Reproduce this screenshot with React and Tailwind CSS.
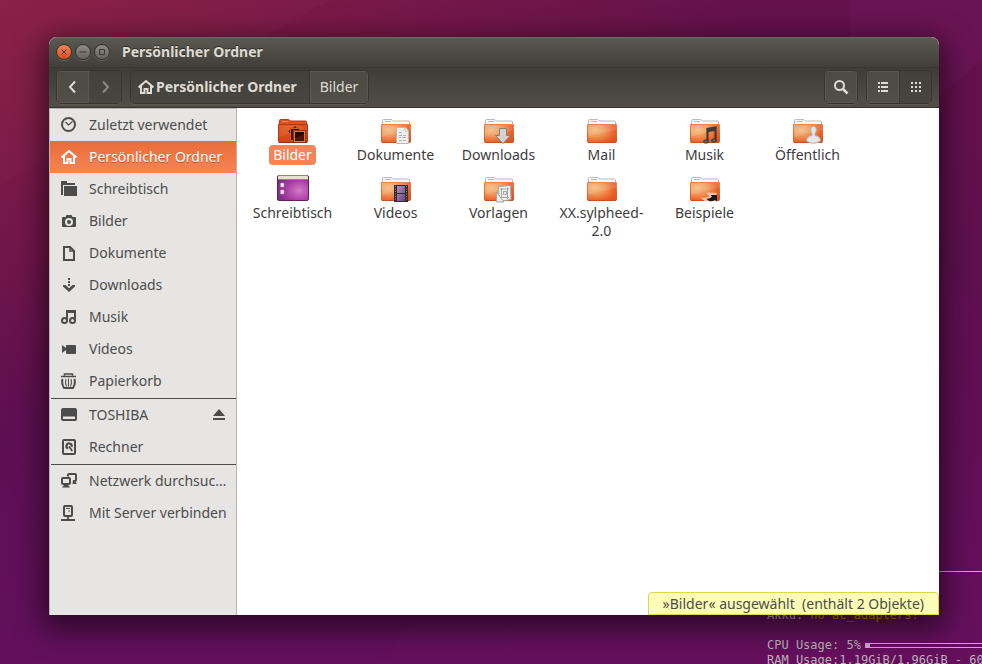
import { useState } from 'react';
import clsx from 'clsx';

const places = [
  { name: 'Zuletzt verwendet', icon: 'recent' },
  { name: 'Persönlicher Ordner', icon: 'home' },
  { name: 'Schreibtisch', icon: 'desktop' },
  { name: 'Bilder', icon: 'camera' },
  { name: 'Dokumente', icon: 'document' },
  { name: 'Downloads', icon: 'download' },
  { name: 'Musik', icon: 'music' },
  { name: 'Videos', icon: 'video' },
  { name: 'Papierkorb', icon: 'trash' },
];

const devices = [
  { name: 'TOSHIBA', icon: 'drive', ejectable: true },
  { name: 'Rechner', icon: 'disk' },
];

const network = [
  { name: 'Netzwerk durchsuc…', icon: 'network' },
  { name: 'Mit Server verbinden', icon: 'server' },
];

const files = [
  { name: 'Bilder', emblem: 'pictures' },
  { name: 'Dokumente', emblem: 'document' },
  { name: 'Downloads', emblem: 'download' },
  { name: 'Mail' },
  { name: 'Musik', emblem: 'music' },
  { name: 'Öffentlich', emblem: 'person' },
  { name: 'Schreibtisch', emblem: 'desktop' },
  { name: 'Videos', emblem: 'video' },
  { name: 'Vorlagen', emblem: 'template' },
  { name: 'XX.sylpheed-2.0' },
  { name: 'Beispiele', emblem: 'link' },
];

const symbols = {
  recent: (
    <g fill="none" stroke="currentColor">
      <circle cx="7.5" cy="7.5" r="6.5" strokeWidth="2" />
      <path d="M4.5 5 7.5 8 11.5 4.5" strokeWidth="1.2" />
    </g>
  ),
  home: (
    <g fill="none" stroke="currentColor" strokeWidth="2">
      <path d="M.6 8.4 8 2l7.4 6.4" />
      <path d="M3 7v7h3.5v-4h3v4H13V7" />
    </g>
  ),
  desktop: (
    <g fill="currentColor">
      <path d="M0 0h6v2h8v2H2v10H0z" />
      <path d="M3 5h13v10H3z" />
    </g>
  ),
  camera: (
    <path
      fill="currentColor"
      fillRule="evenodd"
      d="M5.5 2h5l1 2H14q1 0 1 1v8q0 1-1 1H2q-1 0-1-1V5q0-1 1-1h2.500zM8 5a4 4 0 1 0 0 8 4 4 0 0 0 0-8zm0 2a2 2 0 1 1 0 4 2 2 0 0 1 0-4z"
    />
  ),
  document: (
    <g fill="none" stroke="currentColor" strokeWidth="2">
      <path d="M3 2h6l4 4v9H3z" />
      <path d="M9 2v4h4" strokeWidth="1.5" />
    </g>
  ),
  download: (
    <g fill="currentColor">
      <path d="M7 1h2v2H7zM7 4h2v2H7zM7 7h2v2H7z" />
      <path d="M2 8h2.500L8 11.200 11.500 8H14v1.500L8 15 2 9.500z" />
    </g>
  ),
  music: (
    <g fill="none" stroke="currentColor" strokeWidth="2">
      <circle cx="3.500" cy="11.500" r="2.500" />
      <circle cx="11.500" cy="11.500" r="2.500" />
      <path d="M6 11.500V2h8v9.500" />
      <path d="M6 3h8" strokeWidth="2" />
    </g>
  ),
  video: (
    <g fill="currentColor">
      <path d="M1 4v8l4-3V7z" />
      <rect x="5" y="4" width="10" height="9" rx="1" />
    </g>
  ),
  trash: (
    <g fill="none" stroke="currentColor">
      <path d="M0 3.500h15M3.500 2.500V1h8v1.500" strokeWidth="1.600" />
      <path d="M1.500 6q-1.200 5 1.500 9h9q2.700-4 1.500-9" strokeWidth="2" />
      <path d="M5 6q-1 3.500.500 7.500M10 6q1 3.500-.500 7.500" strokeWidth="1.100" />
      <path d="M7.500 5.500v8" strokeWidth="1" />
    </g>
  ),
  drive: (
    <path
      fill="currentColor"
      fillRule="evenodd"
      d="M2 1h12q2 0 2 2v9q0 2-2 2H2q-2 0-2-2V3q0-2 2-2zM2 9.500v2.500h12V9.500z"
    />
  ),
  disk: (
    <g fill="none" stroke="currentColor">
      <rect x="2" y="1" width="12" height="14" rx="1" strokeWidth="2" />
      <path d="M10.500 7.800A2.600 2.600 0 1 0 7 9.400" strokeWidth="2.200" />
      <path d="M8 7.500 11.300 12" strokeWidth="1.800" />
    </g>
  ),
  network: (
    <g>
      <g fill="none" stroke="currentColor" strokeWidth="2">
        <path d="M7 3.500V2q0-1 1-1h6q1 0 1 1v5q0 1-1 1h-2" />
        <rect x="1" y="5" width="8" height="6" rx="1" />
      </g>
      <path d="M12 7h2.500v2l1.500 2h-4.500zM3 12h4l2 2.500H1z" fill="currentColor" />
    </g>
  ),
  server: (
    <g fill="none" stroke="currentColor" strokeWidth="2">
      <rect x="3" y="1" width="8" height="10" rx="1" />
      <path d="M5 3.500h4M7.500 6h1.500" strokeWidth="1" />
      <path d="M7 11v4M0 15h14" />
    </g>
  ),
  eject: <path fill="currentColor" d="M8 2 14 9H2zM2 11h12v2H2z" />,
  back: <path d="M10 2.500 5 8l5 5.500" fill="none" stroke="currentColor" strokeWidth="2" />,
  forward: <path d="M6 2.500 11 8l-5 5.500" fill="none" stroke="currentColor" strokeWidth="2" />,
  search: (
    <g fill="none" stroke="currentColor">
      <circle cx="6.500" cy="6.500" r="4.500" strokeWidth="2" />
      <path d="M9.500 9.500 14.500 14.500" strokeWidth="2.500" />
    </g>
  ),
  list: (
    <path fill="currentColor" d="M3 3h2v2H3zM6 3h7v2H6zM3 7h2v2H3zM6 7h7v2H6zM3 11h2v2H3zM6 11h7v2H6z" />
  ),
  grid: (
    <path
      fill="currentColor"
      d="M3 3h2v2H3zM7 3h2v2H7zM11 3h2v2h-2zM3 7h2v2H3zM7 7h2v2H7zM11 7h2v2h-2zM3 11h2v2H3zM7 11h2v2H7zM11 11h2v2h-2z"
    />
  ),
};

const Symbol = ({ name }) => (
  <svg className="h-4 w-4 shrink-0" viewBox="0 0 16 16" aria-hidden="true">
    {symbols[name]}
  </svg>
);

const emblems = {
  pictures: (
    <g>
      <path d="m10.500 14 8-5.500 6 8-8 6z" fill="#5e1d0d" stroke="#d9713f" />
      <path d="M13.500 11.500h9v12h-9z" fill="#4b150a" stroke="#c65f30" />
      <rect x="16.500" y="13.500" width="12" height="12" fill="#e07c4a" stroke="#8a3312" />
      <rect x="18" y="15" width="9" height="9" fill="#1f0a07" />
      <path d="M18 24v-3l9-4v7z" fill="#46180f" />
    </g>
  ),
  document: (
    <g>
      <path d="M16.500 10.500h8.500l3.500 3.500v12.500h-12z" fill="#eeeeec" stroke="#b9b9b5" />
      <path d="M25 10.500V14h3.500" fill="#fff" stroke="#b9b9b5" />
      <path
        d="M19 15.500h3M19 18.500h3M23 18.500h3M19 20.500h2M22 20.500h4M19 23.500h3M23 23.500h3"
        stroke="#b0b0ac"
      />
    </g>
  ),
  download: (
    <path d="M16.500 11.500h7v7h4l-7.500 8-7.500-8h4z" fill="#d3d4d2" stroke="#80827e" />
  ),
  music: (
    <g fill="none" stroke="#3a3b39">
      <path d="M18.500 24V12l8-1.500v13" strokeWidth="2.200" />
      <path d="M18.500 14l8-1.500" strokeWidth="2.500" />
      <ellipse cx="17" cy="24.500" rx="2.200" ry="1.500" fill="#6a6b68" strokeWidth="1.200" />
      <ellipse cx="25" cy="23.500" rx="2.200" ry="1.500" fill="#6a6b68" strokeWidth="1.200" />
    </g>
  ),
  person: (
    <path
      d="M21.500 9.500c3.500 0 3.500 4 1.500 7.500v1.500c3.500.5 5.500 2 5.500 5.500q-7 4.500-14 0c0-3.500 2-5 5.500-5.500V17c-2-3.500-2-7.500 1.500-7.500z"
      fill="#e6e6e4"
      stroke="#b0b0ac"
    />
  ),
  video: (
    <g>
      <path d="M14 10h14v17H14z" fill="#2d2b2e" />
      <path d="M17 11h8v7h-8zM17 19h8v7h-8z" fill="url(#film)" />
      <path d="M15.500 11v15M26.500 11v15" stroke="#b9855c" strokeDasharray="1 1.500" />
    </g>
  ),
  template: (
    <g fill="#eeeeec" stroke="#a3a5a8">
      <path d="m15.500 11.500 12-1 .5 14-12 2z" />
      <path d="M17 14h9M18 22.500h8M18.500 13v11M24.500 12.500V24" fill="none" />
      <path d="M20.500 16.500h3v3h-3z" fill="none" />
      <path d="M13.500 17v10H21z" />
    </g>
  ),
  link: (
    <g>
      <path d="M15 24q4 4 9.500-.5l2 2V19h-6.500l2 2q-2.500 3-7 3z" fill="#f0e8e2" stroke="#f0e8e2" strokeWidth="2.500" opacity=".7" />
      <path d="M17 23.500q3.500 1 6-2L21.500 20H28v6.500L26 25q-5 3-9-1.500z" fill="#1a1a1a" />
    </g>
  ),
};

const FolderIcon = ({ emblem, selected }) => {
  if (emblem === 'desktop') {
    return (
      <svg className="h-7 w-8" viewBox="0 0 32 28" aria-hidden="true">
        <rect x=".5" y=".5" width="31" height="25" rx="1.500" fill="url(#wallpaper)" stroke="#62235f" />
        <path d="M1 4.500V2q0-1 1-1h28q1 0 1 1v2.500z" fill="#e5e3cf" />
        <path d="M1 4.500h30M1.500.5h29" stroke="#8c8c6e" />
        <path d="M3.500 8h3.500v4H3.500zM3.500 15h3.500v4H3.500z" fill="#f1e6f3" stroke="#ae86b2" strokeWidth=".5" />
      </svg>
    );
  }

  return (
    <svg className="h-7 w-8" viewBox="0 0 32 28" aria-hidden="true">
      <path
        d="M2.500 8V3.500q0-1 1-1H11q1 0 1.500.8t1.500.7h14.500q1 0 1 1V8z"
        fill={selected ? '#e0511f' : '#f8f8f8'}
        stroke={selected ? '#b33a12' : '#b8bbbd'}
      />
      <path d="M5 4.500h6" stroke={selected ? '#f48a5b' : '#f0aa7d'} />
      <path
        d="M1.500 7.500h29V24.500q0 1-1 1H2.500q-1 0-1-1z"
        fill={selected ? 'url(#folderDark)' : 'url(#folder)'}
        stroke={selected ? '#b8360f' : 'url(#folderEdge)'}
      />
      <path d="M2 8h28v5Q16 15 2 20z" fill="#fff" opacity={selected ? '.06' : '.1'} />
      <path d="M2 25.500h28" stroke={selected ? '#9c2c09' : '#c5521f'} />
      {emblem && emblems[emblem]}
    </svg>
  );
};

// Shared gradients for all file icons
const IconGradients = () => (
  <svg className="absolute h-0 w-0" aria-hidden="true">
    <defs>
      <radialGradient id="folder" cx=".25" cy=".3" r=".85">
        <stop offset="0" stopColor="#f3bd80" />
        <stop offset=".4" stopColor="#ef9a5c" />
        <stop offset=".8" stopColor="#ec622a" />
        <stop offset="1" stopColor="#e4531d" />
      </radialGradient>
      <linearGradient id="folderEdge" x1="0" y1="0" x2="0" y2="1">
        <stop offset="0" stopColor="#e8844f" />
        <stop offset="1" stopColor="#cf5420" />
      </linearGradient>
      <radialGradient id="folderDark" cx=".3" cy=".2" r="1">
        <stop offset="0" stopColor="#e25a28" />
        <stop offset="1" stopColor="#d23a0b" />
      </radialGradient>
      <radialGradient id="wallpaper" cx=".7" cy=".6" r=".8">
        <stop offset="0" stopColor="#d57ac4" />
        <stop offset=".5" stopColor="#aa3fa6" />
        <stop offset="1" stopColor="#6d2a7b" />
      </radialGradient>
      <linearGradient id="film" x1="0" y1="0" x2="1" y2="1">
        <stop offset="0" stopColor="#b08fc0" />
        <stop offset="1" stopColor="#6c4386" />
      </linearGradient>
    </defs>
  </svg>
);

const Wallpaper = () => (
  <svg
    className="absolute inset-0 h-full w-full"
    viewBox="0 0 982 664"
    preserveAspectRatio="none"
    aria-hidden="true"
  >
    <path d="M0 0h330L0 185z" fill="#fff" opacity=".015" />
    <path d="M850 0h132v60L850 170z" fill="#7c1c78" opacity=".2" />
    <path d="M939 260l43 60v344H380l60-80h499z" fill="#7a1468" opacity=".12" />
  </svg>
);

const SystemMonitor = () => (
  <div className="absolute top-[571px] right-0 left-[767px] font-['DejaVu_Sans_Mono','Liberation_Mono',monospace] text-xs leading-[15px] whitespace-nowrap text-[#bcb2ba]">
    <div className="mb-9 h-px bg-[#bcb2ba]" />
    <p>
      Akku: <span className="text-[#b98a00]">no ac_adapters!</span>
    </p>
    <p className="mt-[15px] flex items-center gap-1">
      CPU Usage: 5%
      <span className="flex h-[5px] flex-1 border-y border-l-5 border-[#bcb2ba]" />
    </p>
    <p>RAM Usage:1.19GiB/1.96GiB - 60%</p>
  </div>
);

const WindowButton = ({ label, close, children }) => (
  <button
    aria-label={label}
    className={clsx(
      'flex h-4 w-4 items-center justify-center rounded-full border border-[#33322d] text-[#3a3935] shadow-[0_1px_0_#65635a]',
      close
        ? 'bg-linear-to-b from-[#f4845a] to-[#dd4814]'
        : 'bg-linear-to-b from-[#8f8d85] to-[#65635b]'
    )}
  >
    <svg className="h-3.5 w-3.5 shrink-0" viewBox="0 0 14 14" fill="none" stroke="currentColor" aria-hidden="true">
      {children}
    </svg>
  </button>
);

const groupClass =
  'flex overflow-hidden rounded-[5px] border border-[#363530] text-[#dfdbd2] shadow-[0_1px_0_#5c5a52]';
const raised = 'bg-linear-to-b from-[#4b4a43] to-[#514f48] shadow-[inset_0_0_0_1px_#59574f]';
const pressed = 'bg-linear-to-b from-[#41403a] to-[#474640]';

const ToolButton = ({ label, icon, active, disabled, divided }) => (
  <button
    aria-label={label}
    disabled={disabled}
    className={clsx(
      'flex h-8 w-8 items-center justify-center',
      active || disabled ? pressed : raised,
      disabled && 'text-[#8b8980]',
      divided && 'border-l border-[#363530]'
    )}
  >
    <Symbol name={icon} />
  </button>
);

const PlaceList = ({ items, current, onSelect }) => (
  <ul>
    {items.map((item) => (
      <li
        key={item.name}
        className={clsx(
          'flex h-8 items-center',
          current === item.name && 'bg-linear-to-b from-[#e96d38] to-[#f68456] text-white'
        )}
      >
        <button
          onClick={() => onSelect(item.name)}
          className={clsx(
            'flex h-8 flex-1 items-center gap-3 pl-[11px] text-left whitespace-nowrap',
            current === item.name && '[text-shadow:0_1px_0_#b9552b]'
          )}
        >
          <Symbol name={item.icon} />
          {item.name}
        </button>
        {item.ejectable && (
          <button aria-label="Auswerfen" className="mr-[9px]">
            <Symbol name="eject" />
          </button>
        )}
      </li>
    ))}
  </ul>
);

const App = () => {
  const [place, setPlace] = useState('Persönlicher Ordner');
  const [selected, setSelected] = useState('Bilder');

  return (
    <div className="relative flex min-h-screen flex-col overflow-hidden bg-[radial-gradient(ellipse_75%_65%_at_0%_0%,#891e44,transparent),linear-gradient(to_bottom,#65124c,#5c0f50_55%,#62105c)] pt-[37px] pr-[43px] pb-[49px] pl-[49px] font-['Noto_Sans','Open_Sans',sans-serif] text-sm text-[#4c4c4c]">
      <Wallpaper />
      <SystemMonitor />
      <IconGradients />

      <div className="relative flex flex-1 flex-col rounded-t-lg bg-white shadow-[0_8px_28px_6px_rgba(0,0,0,0.55)]">
        {/* Title bar */}
        <header className="flex h-[30px] items-center rounded-t-lg border-t border-[#6b6960] bg-linear-to-b from-[#5b5950] to-[#403f3a] pb-0.5 pl-[7px] text-[#dfdbd2]">
          <div className="flex gap-[3px]">
            <WindowButton label="Schließen" close>
              <path d="m4.500 4.500 5 5m0-5-5 5" />
            </WindowButton>
            <WindowButton label="Minimieren">
              <path d="M3.500 7h7" />
            </WindowButton>
            <WindowButton label="Maximieren">
              <path d="M4.500 4.500h5v5h-5z" />
            </WindowButton>
          </div>
          <h1 className="ml-3 font-bold [text-shadow:0_-1px_0_#2d2c28]">Persönlicher Ordner</h1>
        </header>

        {/* Toolbar */}
        <div className="flex h-[41px] items-center gap-2 border-t border-b border-t-[#383733] border-b-[#33322e] bg-linear-to-b from-[#3d3c37] to-[#524f47] px-[7px] pb-0.5 text-[#dfdbd2]">
          <div className={groupClass}>
            <ToolButton label="Zurück" icon="back" />
            <ToolButton label="Vor" icon="forward" disabled />
          </div>
          <nav className={groupClass} aria-label="Pfad">
            <button className={clsx('flex h-8 items-center gap-0.5 pr-3 pl-[7px] font-bold', pressed)}>
              <Symbol name="home" />
              Persönlicher Ordner
            </button>
            <button className={clsx('h-8 border-l border-[#363530] px-2.5', raised)}>Bilder</button>
          </nav>
          <div className={clsx(groupClass, 'ml-auto')}>
            <ToolButton label="Suchen" icon="search" />
          </div>
          <div className={groupClass}>
            <ToolButton label="Listenansicht" icon="list" />
            <ToolButton label="Symbolansicht" icon="grid" active divided />
          </div>
        </div>

        <div className="flex flex-1">
          {/* Places */}
          <aside className="w-[188px] shrink-0 border border-b-0 border-[#b8b5b2] bg-[#e6e5e3]">
            <PlaceList items={places} current={place} onSelect={setPlace} />
            <hr className="mt-px ml-px border-[#4c4c4c]" />
            <PlaceList items={devices} current={place} onSelect={setPlace} />
            <hr className="mt-px ml-px border-[#4c4c4c]" />
            <PlaceList items={network} current={place} onSelect={setPlace} />
          </aside>

          {/* Files */}
          <main className="relative flex-1 bg-white">
            <ul className="grid grid-cols-[repeat(auto-fill,103px)] gap-y-2.5 pt-[9px] pl-1">
              {files.map((file) => (
                <li key={file.name}>
                  <button
                    onClick={() => setSelected(file.name)}
                    className="flex w-full flex-col items-center leading-[18px] text-[#3c3c3c]"
                  >
                    <FolderIcon emblem={file.emblem} selected={selected === file.name} />
                    <span
                      className={clsx(
                        'max-w-24 rounded px-1 py-px',
                        selected === file.name && 'bg-[#f4845a] text-white'
                      )}
                    >
                      {file.name}
                    </span>
                  </button>
                </li>
              ))}
            </ul>
            <p className="absolute right-0 bottom-0 rounded-t border border-[#d9d94e] bg-[#fcfcb6] px-3.5 leading-[21px] whitespace-pre">
              »{selected}« ausgewählt{'  '}(enthält 2 Objekte)
            </p>
          </main>
        </div>
      </div>
    </div>
  );
};

export default App;
